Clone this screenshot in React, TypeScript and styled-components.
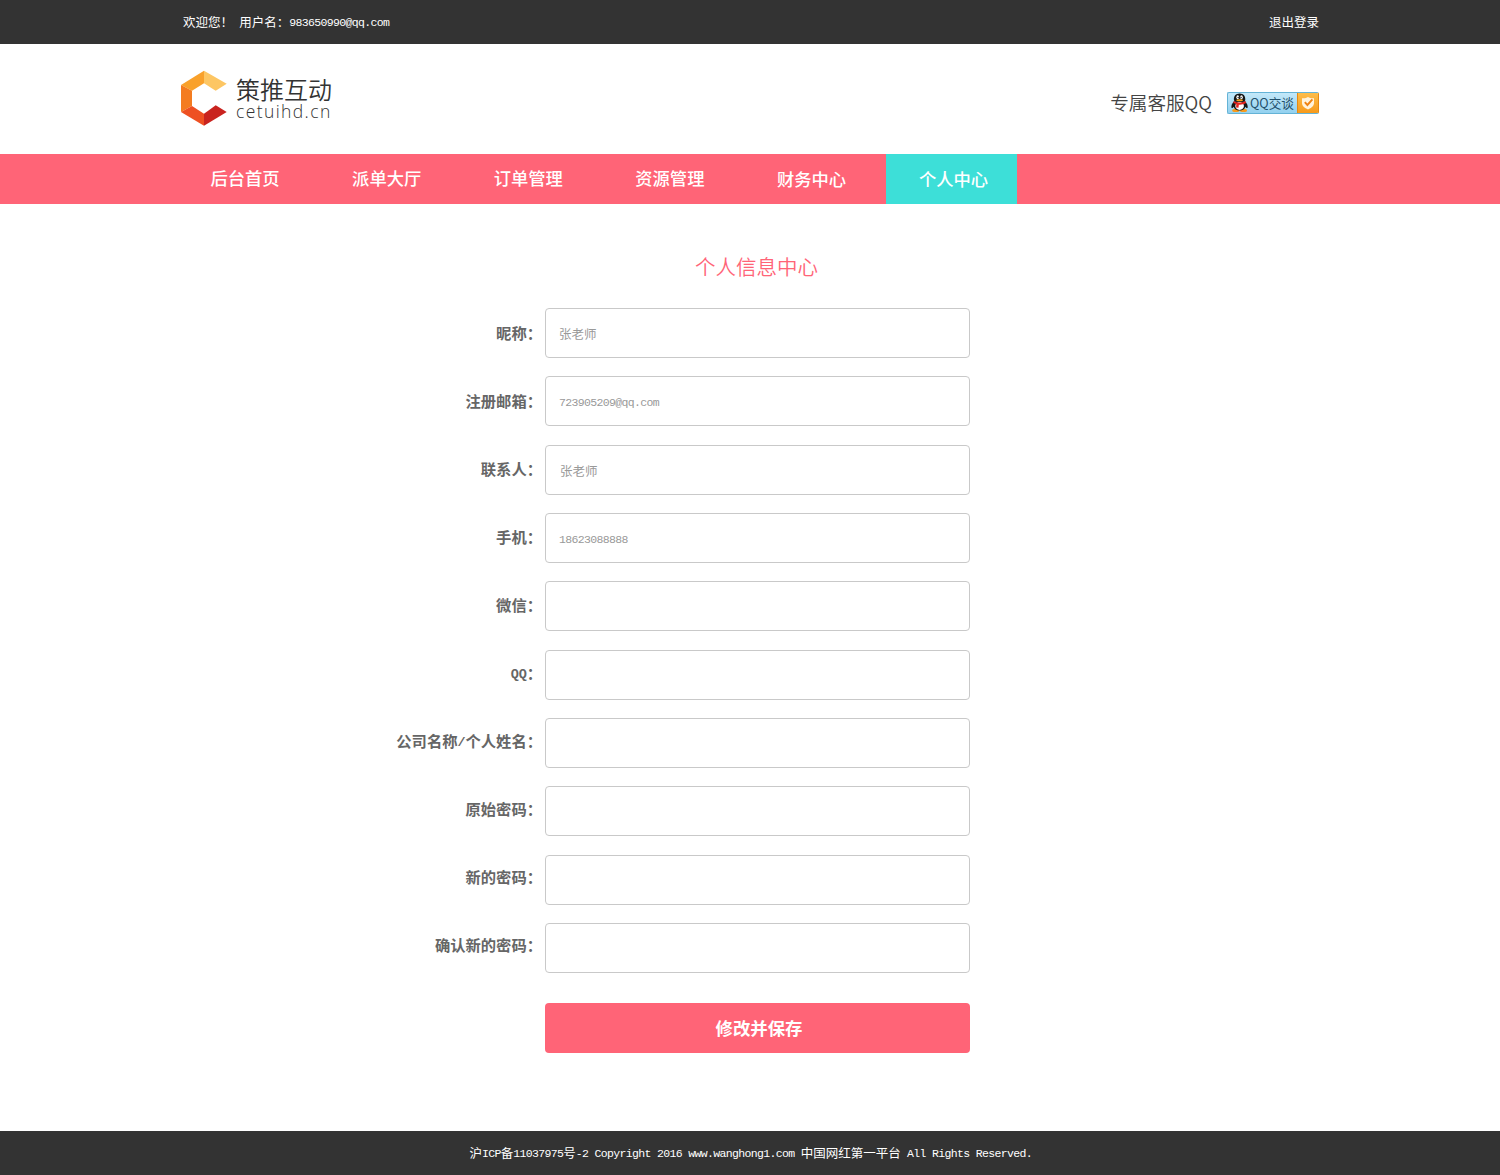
import React from "react";
import styled, { createGlobalStyle } from "styled-components";

const PINK = "#ff6477";
const TEAL = "#3ddfd8";
const DARK = "#333333";

const GlobalStyle = createGlobalStyle`
  *, *::before, *::after { box-sizing: border-box; }
  body {
    margin: 0;
    background: #fff;
    font-family: "Noto Sans CJK SC", sans-serif;
  }
`;

const Page = styled.div`
  display: flex;
  flex-direction: column;
  width: 1500px;
  height: 1175px;
  overflow: hidden;
`;

const TopBar = styled.header`
  display: flex;
  justify-content: space-between;
  height: 44px;
  padding: 0 181px 0 183px;
  background: ${DARK};
  color: #fff;
  font-size: 12.5px;
  line-height: 44px;
  white-space: pre;
`;

const Latin = styled.span<{ $size?: number; $advance?: number }>`
  font-family: "Liberation Mono", monospace;
  font-size: ${(p) => p.$size ?? 11.5}px;
  line-height: 1;
  vertical-align: 1px;
  letter-spacing: ${(p) => (p.$advance ?? 6.25) - (p.$size ?? 11.5) * 0.6001}px;
`;

const Logout = styled.a`
  color: #fff;
  text-decoration: none;
`;

const Brand = styled.div`
  display: flex;
  justify-content: space-between;
  height: 110px;
  padding: 26px 181px 0 180px;
`;

const Logo = styled.div`
  display: flex;
  gap: 8px;
`;

const LogoWords = styled.div`
  display: flex;
  flex-direction: column;
  padding-top: 5px;
  color: #333;
`;

const LogoName = styled.span`
  font-size: 24px;
  line-height: 27px;
  font-weight: 350;
`;

const LogoDomain = styled.span`
  font-family: "Open Sans", sans-serif;
  font-size: 17.5px;
  line-height: 19px;
  font-weight: 300;
  letter-spacing: 1.4px;
`;

const Support = styled.div`
  display: flex;
  align-items: center;
  gap: 15px;
  height: 22px;
  margin-top: 22px;
  color: #444;
`;

const SupportText = styled.span`
  padding-bottom: 3px;
  font-size: 18.6px;
  font-weight: 350;
`;

const QQButton = styled.a`
  display: flex;
  width: 92px;
  height: 22px;
  border: 1px solid #64b3d6;
  border-right-color: #e88a10;
  border-radius: 2px;
  overflow: hidden;
  background: linear-gradient(#c3e8f9, #93d1ef);
  color: #24506b;
`;

const QQText = styled.span`
  width: 47px;
  margin-left: 1px;
  font-size: 12.6px;
  line-height: 20px;
  font-weight: 400;
  white-space: nowrap;
`;

const QQCheck = styled.span`
  display: flex;
  flex: 1;
  align-items: center;
  justify-content: center;
  margin: -1px 0;
  border: 1px solid #e88a10;
  border-right: 0;
  background: linear-gradient(#fdbd4a, #f79a1b);
`;

const Nav = styled.nav`
  display: flex;
  gap: 10.6px;
  height: 50px;
  padding-left: 178px;
  background: ${PINK};
`;

const NavItem = styled.a<{ $active?: boolean; $drop?: boolean }>`
  width: 131px;
  padding: ${(p) => (p.$drop ? 1 : 0)}px 0 0 ${(p) => (p.$active ? 33 : 32.5)}px;
  background: ${(p) => (p.$active ? TEAL : "transparent")};
  color: #fff;
  font-size: 17.3px;
  font-weight: 500;
  line-height: 48px;
  text-decoration: none;
`;

const Main = styled.main`
  display: flex;
  flex: 1;
  flex-direction: column;
  padding-left: 380px;
`;

const Title = styled.h1`
  width: 425px;
  margin: 46px 0 0 165px;
  padding-right: 2px;
  color: ${PINK};
  font-size: 20.5px;
  font-weight: 350;
  line-height: 32px;
  text-align: center;
`;

const Form = styled.form`
  display: flex;
  flex-direction: column;
  gap: 18.33px;
  margin-top: 26px;
`;

const Row = styled.div`
  display: grid;
  grid-template-columns: 162px 425px;
  grid-template-rows: 50px;
  column-gap: 3px;
  height: 50px;
`;

const Label = styled.label<{ $lift: number }>`
  margin-top: ${(p) => -1 - p.$lift}px;
  color: #666;
  font-size: 15.3px;
  font-weight: 700;
  line-height: 50px;
  text-align: right;
  white-space: nowrap;
`;

const Field = styled.div<{ $indent?: number }>`
  height: 50px;
  padding: 1px 0 0 ${(p) => p.$indent ?? 13}px;
  border: 1px solid #c9c9c9;
  border-radius: 4px;
  color: #999;
  font-size: 12.5px;
  line-height: 48px;
`;

const Submit = styled.button`
  width: 425px;
  height: 50px;
  margin: 12px 0 0 165px;
  padding: 0 0 0 3px;
  border: 0;
  border-radius: 4px;
  background: ${PINK};
  color: #fff;
  font-family: inherit;
  font-size: 17.4px;
  font-weight: 700;
  line-height: 50px;
`;

const Footer = styled.footer`
  height: 44px;
  padding-left: 469.5px;
  background: ${DARK};
  color: #fff;
  font-size: 12.5px;
  line-height: 44px;
  white-space: pre;
`;

function Mixed({ text, size, advance }: { text: string; size?: number; advance?: number }) {
  return (
    <>
      {text.split(/([\x20-\x7e]+)/).map((part, i) =>
        i % 2 ? (
          <Latin key={i} $size={size} $advance={advance}>{part}</Latin>
        ) : (
          part
        ),
      )}
    </>
  );
}

const LogoMark = () => (
  <svg width="48" height="56" viewBox="180 70 48 56">
    <polygon points="204,70.7 181,85 192,90.7 204,83.3" fill="#f9a12b" />
    <polygon points="204,70.7 226.7,83.7 215.7,90.7 204,83.3" fill="#fdc663" />
    <polygon points="181,85 192,90.7 192,106 181,112" fill="#f47c20" />
    <polygon points="181,112 192,106 204,113.7 204,125.7" fill="#ee5022" />
    <polygon points="204,125.7 204,113.7 215.7,105.3 226.7,112" fill="#c9231f" />
  </svg>
);

const Penguin = () => (
  <svg width="21" height="20" viewBox="1 1.500 19 18">
    <ellipse cx="8" cy="17.2" rx="3.2" ry="1.5" fill="#f79a1b" />
    <ellipse cx="15" cy="17.2" rx="3.2" ry="1.5" fill="#f79a1b" />
    <path d="M6.5 9C4.6 11 3.7 13 4.2 15c.7.3 1.5-.6 2-1.2.5 2 2.2 3.4 5.2 3.4s4.800-1.400 5.300-3.400c.5.6 1.300 1.500 2 1.200.5-2-.4-4-2.300-6z" fill="#161616" />
    <ellipse cx="11.500" cy="13.200" rx="3.900" ry="3.600" fill="#fff" />
    <path d="M6.400 8C6 4.500 8 2 11.500 2s5.500 2.500 5.100 6c-.3 2-9.900 2-10.200 0z" fill="#161616" />
    <ellipse cx="9.800" cy="5.300" rx="1.200" ry="1.700" fill="#fff" />
    <ellipse cx="13.200" cy="5.300" rx="1.200" ry="1.700" fill="#fff" />
    <circle cx="10.200" cy="5.500" r=".6" fill="#111" />
    <circle cx="12.800" cy="5.500" r=".6" fill="#111" />
    <ellipse cx="11.500" cy="8" rx="3" ry="1" fill="#f9a51a" />
    <path d="M6.200 8.600c3 2 7.600 2 10.600 0l.5 1.900c-2 1.300-4.600 1.700-6.500 1.500l-.3 2.700-2.200-.2.200-3-2.600-1.100z" fill="#e5251f" />
  </svg>
);

const Shield = () => (
  <svg width="14" height="14" viewBox="0 0 14 14">
    <path d="M1 2.200C3.500 2.400 5.500 2 7 1c1.500 1 3.500 1.400 6 1.200V7c0 3-2.500 5-6 6.400C3.500 12 1 10 1 7z" fill="#fff3dc" />
    <path d="M3.800 6.200 6.400 9l5-5.600" fill="none" stroke="#f08312" strokeWidth="1.900" />
  </svg>
);

const navItems = ["后台首页", "派单大厅", "订单管理", "资源管理", "财务中心", "个人中心"];

const fields: { label: string; value?: string; indent?: number }[] = [
  { label: "昵称：", value: "张老师" },
  { label: "注册邮箱：", value: "723905209@qq.com" },
  { label: "联系人：", value: "张老师", indent: 14 },
  { label: "手机：", value: "18623088888" },
  { label: "微信：" },
  { label: "QQ：" },
  { label: "公司名称/个人姓名：" },
  { label: "原始密码：" },
  { label: "新的密码：" },
  { label: "确认新的密码：" },
];

export default function App() {
  return (
    <Page>
      <GlobalStyle />
      <TopBar>
        <span><Mixed text="欢迎您！ 用户名：983650990@qq.com" /></span>
        <Logout>退出登录</Logout>
      </TopBar>
      <Brand>
        <Logo>
          <LogoMark />
          <LogoWords>
            <LogoName>策推互动</LogoName>
            <LogoDomain>cetuihd.cn</LogoDomain>
          </LogoWords>
        </Logo>
        <Support>
          <SupportText>专属客服QQ</SupportText>
          <QQButton>
            <Penguin />
            <QQText>QQ交谈</QQText>
            <QQCheck><Shield /></QQCheck>
          </QQButton>
        </Support>
      </Brand>
      <Nav>
        {navItems.map((name, i) => (
          <NavItem key={name} $active={i === 5} $drop={i > 3}>{name}</NavItem>
        ))}
      </Nav>
      <Main>
        <Title>个人信息中心</Title>
        <Form>
          {fields.map((f, i) => (
            <Row key={f.label}>
              <Label $lift={i * 0.33}>
                <Mixed text={f.label} size={13.5} advance={8} />
              </Label>
              <Field $indent={f.indent}>{f.value && <Mixed text={f.value} />}</Field>
            </Row>
          ))}
          <Submit type="button">修改并保存</Submit>
        </Form>
      </Main>
      <Footer>
        <Mixed text="沪ICP备11037975号-2 Copyright 2016 www.wanghong1.com 中国网红第一平台 All Rights Reserved." />
      </Footer>
    </Page>
  );
}
